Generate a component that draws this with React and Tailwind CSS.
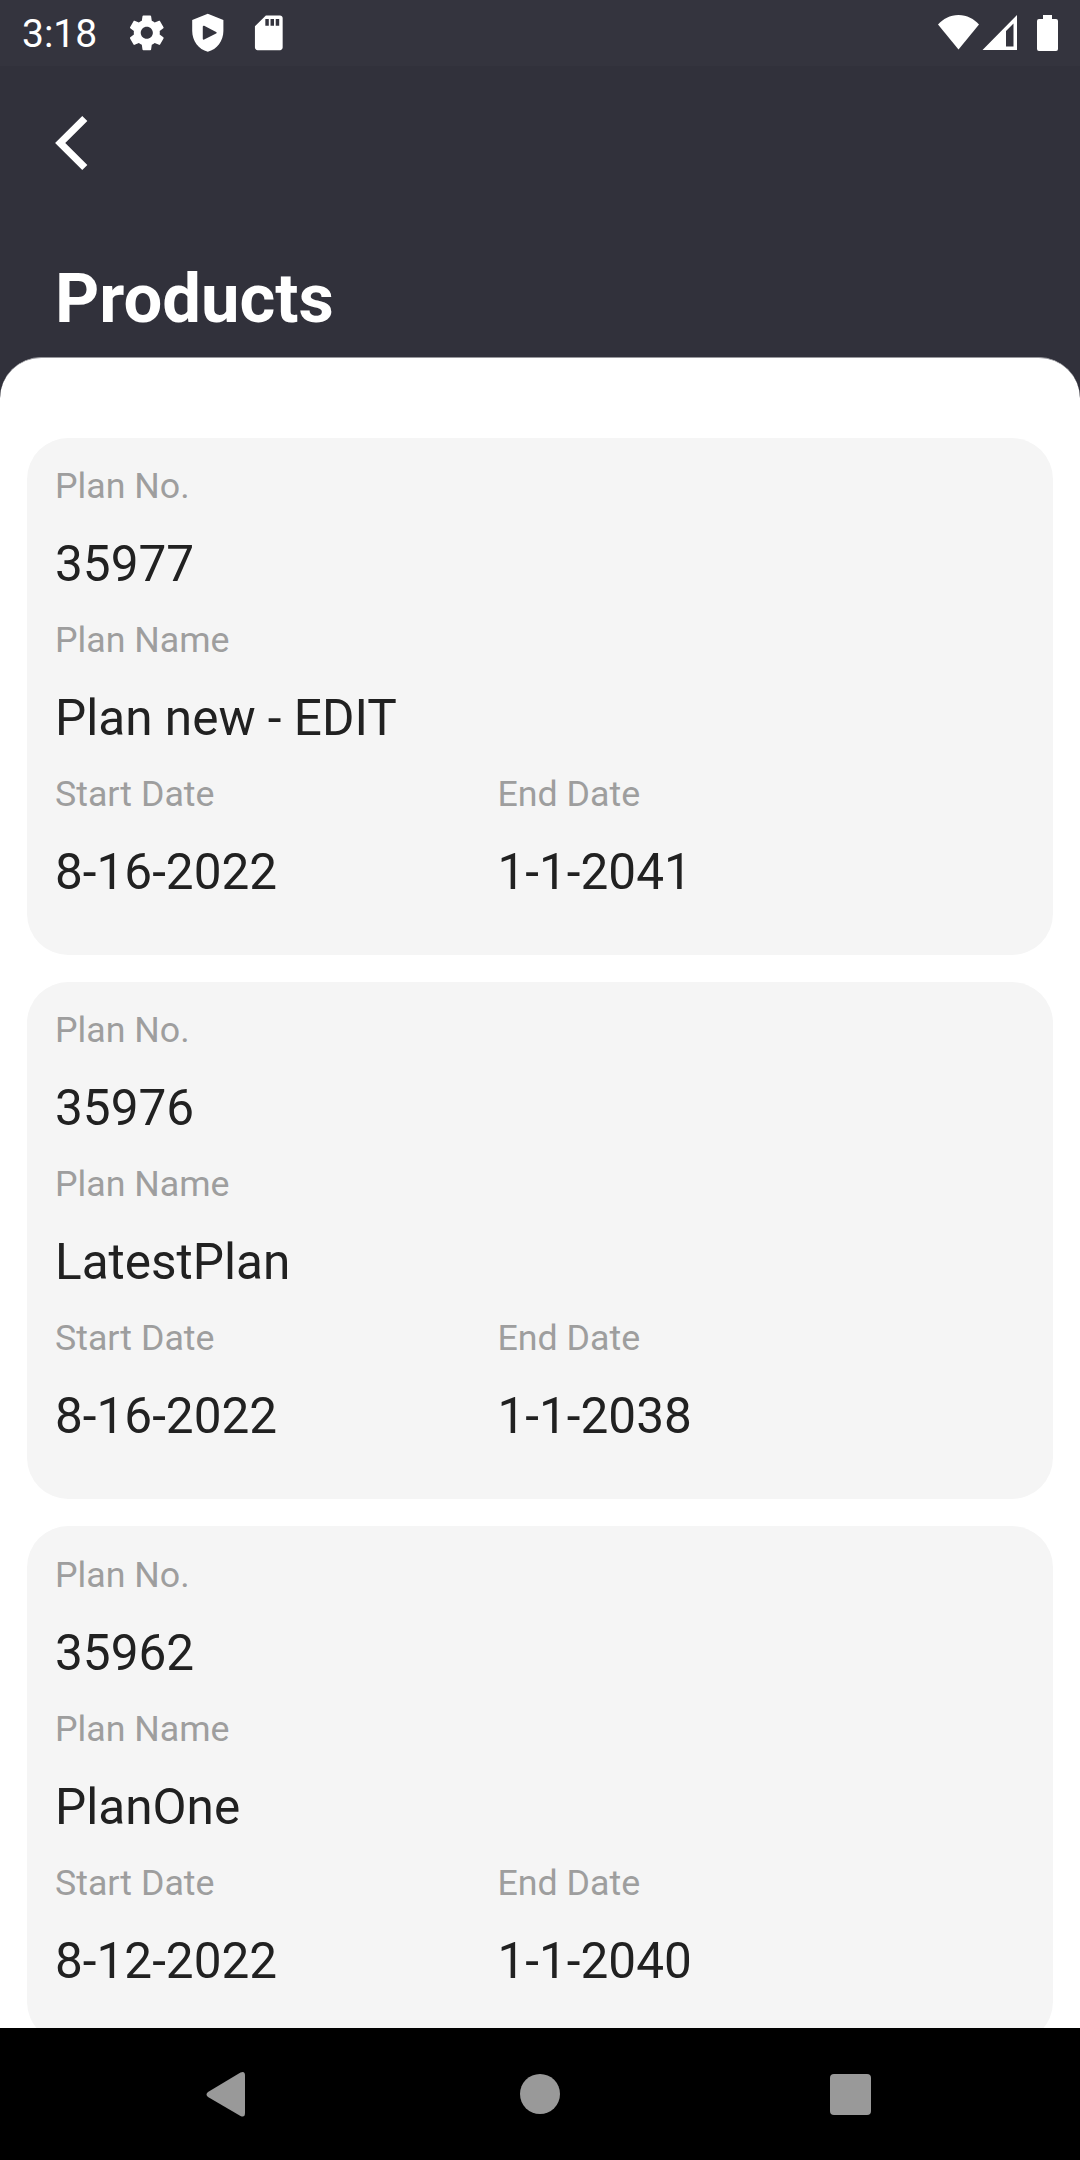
import React from "react";

const plans = [
  { no: "35977", name: "Plan new - EDIT", start: "8-16-2022", end: "1-1-2041" },
  { no: "35976", name: "LatestPlan", start: "8-16-2022", end: "1-1-2038" },
  { no: "35962", name: "PlanOne", start: "8-12-2022", end: "1-1-2040" },
];

function GearIcon() {
  return (
    <svg className="h-[41.6px] w-[41.6px]" viewBox="0 0 24 24" fill="currentColor">
      <path d="M19.43 12.98c.04-.32.07-.64.07-.98s-.03-.66-.07-.98l2.11-1.65c.19-.15.24-.42.12-.64l-2-3.46c-.12-.22-.39-.3-.61-.22l-2.49 1c-.52-.4-1.08-.73-1.69-.98l-.38-2.65C14.46 2.18 14.25 2 14 2h-4c-.25 0-.46.18-.49.42l-.38 2.65c-.61.25-1.17.59-1.69.98l-2.49-1c-.23-.09-.49 0-.61.22l-2 3.46c-.13.22-.07.49.12.64l2.11 1.65c-.04.32-.07.65-.07.98s.03.66.07.98l-2.11 1.65c-.19.15-.24.42-.12.64l2 3.46c.12.22.39.3.61.22l2.49-1c.52.4 1.08.73 1.69.98l.38 2.65c.03.24.24.42.49.42h4c.25 0 .46-.18.49-.42l.38-2.65c.61-.25 1.17-.59 1.69-.98l2.49 1c.23.09.49 0 .61-.22l2-3.46c.12-.22.07-.49-.12-.64l-2.11-1.65zM12 15.5c-1.93 0-3.5-1.57-3.5-3.5s1.57-3.5 3.5-3.5 3.5 1.57 3.5 3.5-1.57 3.5-3.5 3.5z" />
    </svg>
  );
}

function ShieldIcon() {
  return (
    <svg className="h-[41.6px] w-[41.6px]" viewBox="0 0 24 24" fill="currentColor" fillRule="evenodd">
      <path d="M12 1L3 4.6V11c0 5.6 3.7 10.6 9 12 5.3-1.4 9-6.4 9-12V4.6L12 1zM9.1 8.5c0-.5.4-.7.8-.5l6.9 3.5c.4.2.4.7 0 .9L9.9 15.9c-.4.2-.8 0-.8-.5z" />
    </svg>
  );
}

function SdCardIcon() {
  return (
    <svg className="h-[41.6px] w-[41.6px]" viewBox="0 0 24 24" fill="currentColor" fillRule="evenodd">
      <path d="M18.5 2h-8.2L4 8.2V20.5c0 .8.7 1.5 1.5 1.5h13c.8 0 1.5-.7 1.5-1.5v-17c0-.8-.7-1.5-1.5-1.5zM10 4h2v4h-2zM13 4h2v4h-2zM16 4h2v4h-2z" />
    </svg>
  );
}

function StatusBar() {
  return (
    <div className="flex h-[66px] items-start justify-between bg-[#34343e]">
      <div className="flex items-start pl-[22px]">
        <span className="mt-[11px] w-[104px] text-[39px] leading-[47px]">3:18</span>
        <div className="mt-[12px] flex gap-[19.4px]">
          <GearIcon />
          <ShieldIcon />
          <SdCardIcon />
        </div>
      </div>
      <svg className="h-[66px] w-[150px]" viewBox="930 0 150 66" fill="currentColor">
        <path d="M958.5 49.5L938 24.5C943 19 950 15 958.5 15S974 19 979 24.5z" />
        <path fillRule="evenodd" d="M982.5 50L1017 15V50zM1006 31V46.5H1013.5V23.5z" />
        <path d="M1043 15h9v4h4q2 0 2 2v28q0 2-2 2h-17q-2 0-2-2V21q0-2 2-2h4z" />
      </svg>
    </div>
  );
}

function Field({ label, value }) {
  return (
    <div className="flex flex-col gap-[28px]">
      <div className="text-[35.75px] leading-[42px] text-[#9e9e9e]">{label}</div>
      <div className="text-[49.5px] leading-[58px] text-[#212121]">{value}</div>
    </div>
  );
}

function PlanCard({ plan }) {
  return (
    <div className="flex h-[516.9px] shrink-0 flex-col gap-[26px] rounded-[41.25px] bg-[#f5f5f5] px-[28px] pt-[27.2px]">
      <Field label="Plan No." value={plan.no} />
      <Field label="Plan Name" value={plan.name} />
      <div className="grid grid-cols-[442.5px_1fr]">
        <Field label="Start Date" value={plan.start} />
        <Field label="End Date" value={plan.end} />
      </div>
    </div>
  );
}

export default function App() {
  return (
    <div className="flex h-[2160px] w-[1080px] flex-col overflow-hidden bg-[#31313b] font-['Roboto',sans-serif] text-white">
      <StatusBar />
      <header className="flex h-[291px] shrink-0 flex-col px-[55px] pt-[49px]">
        <svg className="h-[56px] w-[34px]" viewBox="55 115 34 56" fill="none" stroke="currentColor" strokeWidth="7.2">
          <path d="M84.8 118.5L60.2 143L84.8 167.5" />
        </svg>
        <h1 className="mt-[87px] text-[68.75px] font-bold leading-[81px]">Products</h1>
      </header>
      <main className="flex min-h-0 flex-1 flex-col gap-[27.5px] overflow-hidden rounded-t-[41.25px] border-t border-[#98989d] bg-white px-[27px] pt-[79.7px]">
        {plans.map((plan) => (
          <PlanCard key={plan.no} plan={plan} />
        ))}
      </main>
      <nav className="flex h-[132px] shrink-0 bg-black text-[#999999]">
        <svg className="h-[132px] w-[1080px]" viewBox="0 2028 1080 132" fill="currentColor">
          <path d="M208 2092L240.5 2072.5Q245 2070.5 245 2075.5V2113Q245 2118 240.5 2116L208 2097Q205 2094.5 208 2092z" />
          <circle cx="540" cy="2094" r="20" />
          <rect x="830" y="2074" width="41" height="41" rx="4" />
        </svg>
      </nav>
    </div>
  );
}
